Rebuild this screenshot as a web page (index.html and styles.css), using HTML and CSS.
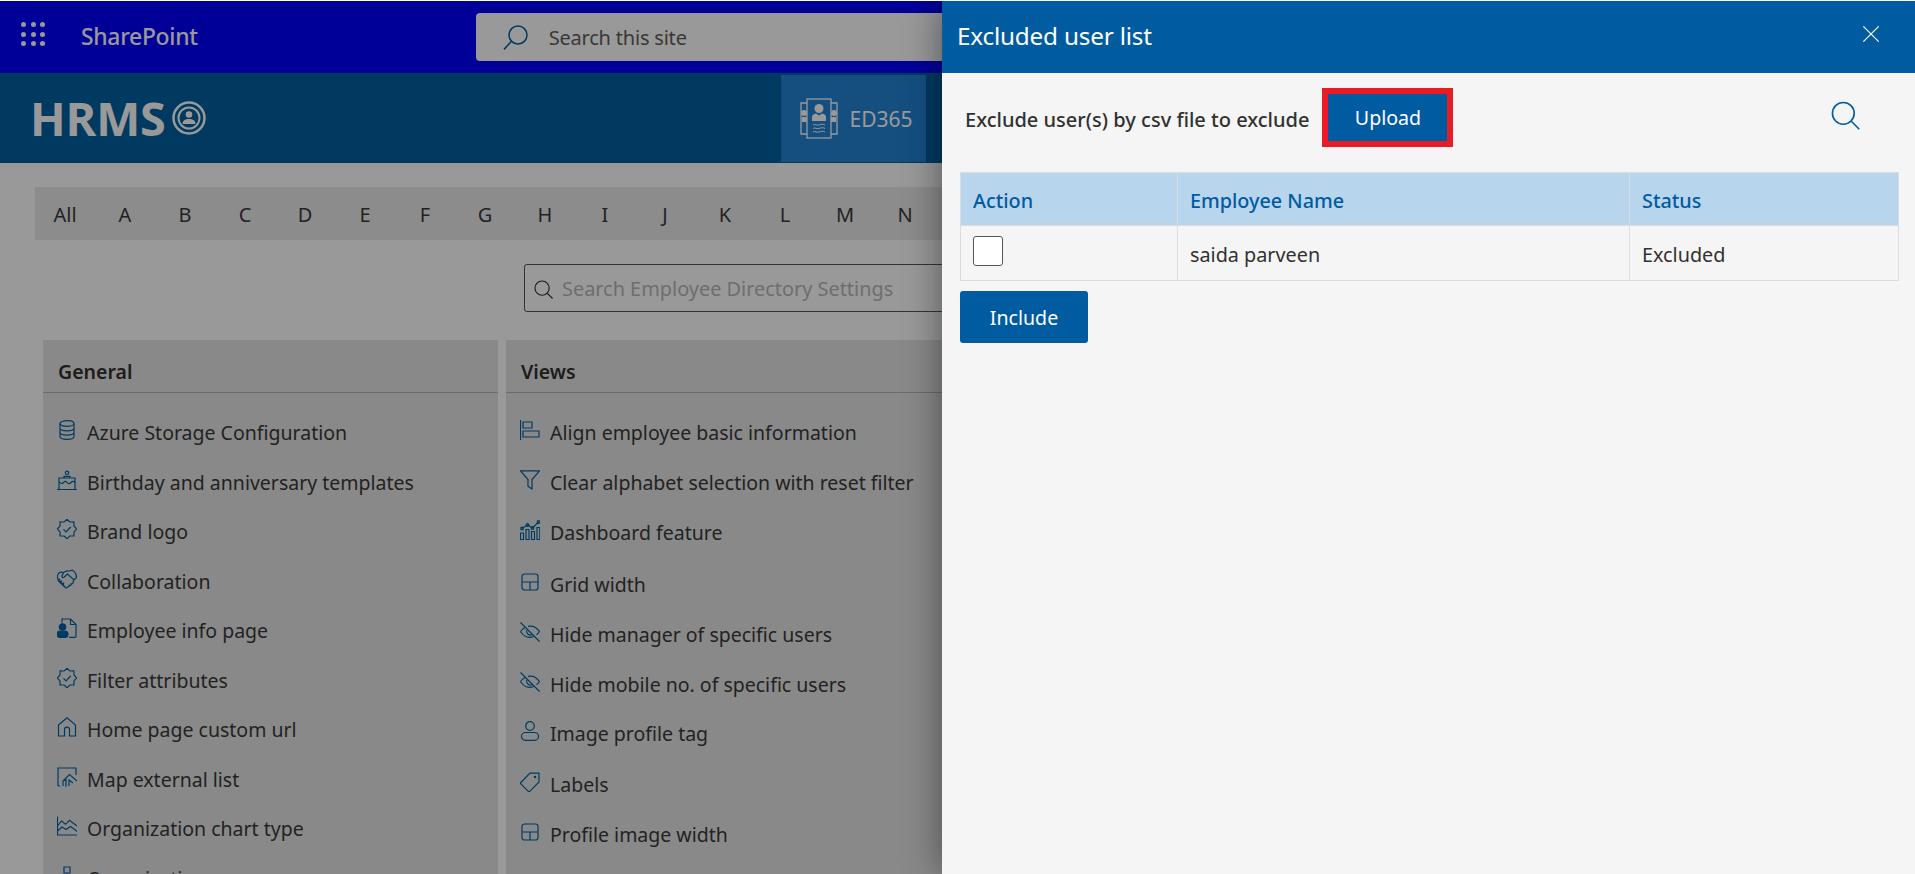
FILE: index.html
```html
<!DOCTYPE html>
<html lang="en">
<head>
<meta charset="utf-8">
<title>Excluded user list</title>
<link rel="stylesheet" href="styles.css">
</head>
<body>
<svg class="sprite" aria-hidden="true">
  <symbol id="i-db" viewBox="0 0 20 20"><ellipse cx="10" cy="3.500" rx="7" ry="2.800"/><path d="M3 3.500v13c0 1.600 3.100 2.800 7 2.800s7-1.200 7-2.800v-13M3 8c0 1.600 3.100 2.800 7 2.800S17 9.600 17 8M3 12.300c0 1.600 3.100 2.800 7 2.800s7-1.200 7-2.800"/></symbol>
  <symbol id="i-cake" viewBox="0 0 20 20"><circle cx="10" cy="2.800" r="1.700"/><path d="M7 8V6.300h6V8M2 19.300V8h16v11.300M0 19.500h20M2 11.500c2 2.500 3 2.500 4.500 1s2.500-1.500 3.500 0 2.500 1.500 4 0 2.500-1.500 4 0"/></symbol>
  <symbol id="i-badge" viewBox="0 0 20 20"><path d="M10 .3l2.900 2.700 4-.1.1 4 2.700 3.100-2.700 2.900-.1 4-4 .1-2.900 2.700-2.900-2.700-4-.1-.1-4L.3 10l2.700-3.100.1-4 4 .1z"/><path d="M6.500 10.300l2.500 2.500 4.700-4.800"/></symbol>
  <symbol id="i-shake" viewBox="0 0 20 20"><path d="M6.500 3.500c2-1.500 3.500-2 5.500-1.500l3.500-.8c2.500 1.500 4 4.500 4 7.300l-2.500 2.500L10.500 5 7 8.300c-1 .7-2.200 0-2-1.300L6.500 3.500zM6.500 3.500C4 2.800 3 3 1.500 4.500.3 6 .2 8 .8 10M.8 10l7.700 8.500c1 1 2.300.2 2-1M3 9.800L1.200 11.500l1.800 1.800 1.800-1.700M5 12l-1.800 1.700 1.800 1.800 1.800-1.700M7 14.300l-1.600 1.500 2 2M10.500 17.500c1 .5 2 0 1.800-1.200 1.200.5 2.300-.3 2-1.500 1.200.3 2.300-.7 1.700-2L17 11.500"/></symbol>
  <symbol id="i-pdoc" viewBox="0 0 20 20"><path d="M5 4.800V1h8.500L19 6.500V18c0 .8-.5 1.300-1.300 1.300H12M13.500 1v5.500H19"/><circle cx="5.500" cy="9" r="3.200" class="solid"/><path d="M0 16.500c0-2.200 1.500-3.300 3-3.300h5c1.700 0 3 1.100 3 3.300 0 1.800-1.300 3-3 3H3c-1.700 0-3-1.200-3-3z" class="solid"/></symbol>
  <symbol id="i-home" viewBox="0 0 20 20"><path d="M10 .8L1.500 8v11h6v-6.500c0-1.400 1-2.300 2.500-2.300s2.500.9 2.500 2.300V19h6V8z"/></symbol>
  <symbol id="i-map" viewBox="0 0 20 20"><path d="M1 19V1h18v7M1 19h2M8 19h1v-6l-3 1 6.500-6.500L20 14M6 19v-5M12 19v-6l4 3"/></symbol>
  <symbol id="i-area" viewBox="0 0 20 20"><path d="M.5 .5v18.500h20M.5 10l4-5 4 3.300 4-4 7.500 5.700M.5 15l4.500-4 4 2.500 4.500-3 7 5"/></symbol>
  <symbol id="i-org" viewBox="0 0 20 20"><path d="M7 1h6v6H7zM10 7v4M2 11h16M2 11v3M18 11v3M0 14h5v5H0zM15 14h5v5h-5zM7.500 14h5v5h-5zM10 11v3"/></symbol>
  <symbol id="i-align" viewBox="0 0 20 20"><path d="M.5 0v20M3 2h9v6H3zM3 11h16v6H3z"/></symbol>
  <symbol id="i-filter" viewBox="0 0 20 20"><path d="M.5 .8h19L12 9.500V19l-4-2.700V9.500z"/></symbol>
  <symbol id="i-bars" viewBox="0 0 20 20"><path d="M.5 13h3v6.500h-3zM6 9.500h3v10H6zM11.500 11.500h3v8h-3zM17 7.500h2.800v12H17zM2 8.500L7.500 5l5 3 6-6"/><circle cx="2" cy="8.500" r="1.300"/><circle cx="7.500" cy="5" r="1.300"/><circle cx="12.500" cy="8" r="1.300"/><circle cx="18.500" cy="2" r="1.300"/></symbol>
  <symbol id="i-grid" viewBox="0 0 20 20"><rect x="2" y="2" width="16" height="16" rx="2.500"/><path d="M2 10h16M10 10v8"/></symbol>
  <symbol id="i-eyeoff" viewBox="0 0 20 20"><path d="M.5 .5l19 19M.5 9.500C2 7.500 3.500 6.300 5 5.500M8 4.300c5-1 8.500.8 11.500 5.200-.9 1.400-2 2.500-3 3.300M13.500 14.500c-5 1.900-9.500.3-13-5"/><path d="M6.800 8c-1 3 2 6 5.200 4.800"/></symbol>
  <symbol id="i-person" viewBox="0 0 20 20"><circle cx="10" cy="5" r="4.300"/><rect x="1.500" y="11.500" width="17" height="7.800" rx="3.900"/></symbol>
  <symbol id="i-tag" viewBox="0 0 20 20"><path d="M.8 10.500L10 1.200h9V10l-9.300 9.300c-.4.400-1 .4-1.400 0L.8 11.900c-.4-.4-.4-1 0-1.400z"/><circle cx="15" cy="5" r=".7"/></symbol>
  <symbol id="i-search" viewBox="0 0 20 20"><circle cx="8.500" cy="8.500" r="7.500"/><path d="M14 14l5.500 5.500"/></symbol>
  <symbol id="i-search-flip" viewBox="0 0 20 20"><circle cx="12" cy="8" r="7.200"/><path d="M6.800 13L.8 19.500"/></symbol>
  <symbol id="i-close" viewBox="0 0 20 20"><path d="M1.500 1.500l17 17M18.500 1.500l-17 17"/></symbol>
</svg>

<div class="page">
  <header class="suitebar">
    <div class="launcher" aria-label="App launcher">
      <i></i><i></i><i></i><i></i><i></i><i></i><i></i><i></i><i></i>
    </div>
    <span class="product">SharePoint</span>
    <div class="sitesearch">
      <svg class="icon sitesearch-icon"><use href="#i-search-flip"/></svg>
      <span>Search this site</span>
    </div>
  </header>

  <section class="band">
    <div class="logo">
      <span class="logo-text">HRMS</span>
      <svg class="logo-mark" viewBox="0 0 34 34">
        <circle cx="17" cy="17" r="15.500" class="logo-ring"/>
        <circle cx="17" cy="17" r="10.500" class="logo-ring-thin"/>
        <circle cx="17" cy="13.500" r="3.300" class="logo-fill"/>
        <path d="M10.500 23c0-3.500 2.500-5 6.500-5s6.500 1.500 6.500 5z" class="logo-fill"/>
      </svg>
    </div>
    <a class="apptab">
      <svg class="apptab-icon" viewBox="0 0 38 42">
        <path d="M7 5H1v31h6M31 5h6v31h-6" class="line"/>
        <rect x="7" y="1" width="24" height="39" class="line"/>
        <circle cx="19" cy="10.500" r="4.500" class="fill"/>
        <path d="M12 23v-4c0-2 1.500-3 4-3.500l3 2 3-2c2.500.5 4 1.500 4 3.500v4z" class="fill"/>
        <path d="M13 27c2-1.500 4 1 6 0s4-1 6 0M13 30.500c2-1.500 4 1 6 0s4-1 6 0M13 34c2-1.500 4 1 6 0s4-1 6 0" class="line thin"/>
        <circle cx="4" cy="15" r="3" class="fill"/>
        <circle cx="34" cy="15" r="3" class="fill"/>
        <path d="M2 19h5v5H2zM31 19h5v5h-5z" class="fill"/>
      </svg>
      <span>ED365</span>
    </a>
  </section>

  <nav class="alpha">
    <span>All</span><span>A</span><span>B</span><span>C</span><span>D</span><span>E</span><span>F</span><span>G</span><span>H</span><span>I</span><span>J</span><span>K</span><span>L</span><span>M</span><span>N</span>
  </nav>

  <div class="dirsearch">
    <svg class="icon dirsearch-icon"><use href="#i-search"/></svg>
    <span>Search Employee Directory Settings</span>
  </div>

  <div class="cards">
    <section class="card">
      <h2>General</h2>
      <ul>
        <li><svg class="icon"><use href="#i-db"/></svg>Azure Storage Configuration</li>
        <li><svg class="icon"><use href="#i-cake"/></svg>Birthday and anniversary templates</li>
        <li><svg class="icon"><use href="#i-badge"/></svg>Brand logo</li>
        <li><svg class="icon"><use href="#i-shake"/></svg>Collaboration</li>
        <li><svg class="icon"><use href="#i-pdoc"/></svg>Employee info page</li>
        <li><svg class="icon"><use href="#i-badge"/></svg>Filter attributes</li>
        <li><svg class="icon"><use href="#i-home"/></svg>Home page custom url</li>
        <li><svg class="icon"><use href="#i-map"/></svg>Map external list</li>
        <li><svg class="icon"><use href="#i-area"/></svg>Organization chart type</li>
        <li><svg class="icon"><use href="#i-org"/></svg>Organization name</li>
      </ul>
    </section>
    <section class="card">
      <h2>Views</h2>
      <ul>
        <li><svg class="icon"><use href="#i-align"/></svg>Align employee basic information</li>
        <li><svg class="icon"><use href="#i-filter"/></svg>Clear alphabet selection with reset filter</li>
        <li class="tall"><svg class="icon"><use href="#i-bars"/></svg>Dashboard feature</li>
        <li class="tall"><svg class="icon"><use href="#i-grid"/></svg>Grid width</li>
        <li><svg class="icon"><use href="#i-eyeoff"/></svg>Hide manager of specific users</li>
        <li><svg class="icon"><use href="#i-eyeoff"/></svg>Hide mobile no. of specific users</li>
        <li><svg class="icon"><use href="#i-person"/></svg>Image profile tag</li>
        <li class="tall"><svg class="icon"><use href="#i-tag"/></svg>Labels</li>
        <li><svg class="icon"><use href="#i-grid"/></svg>Profile image width</li>
      </ul>
    </section>
    <section class="card"></section>
  </div>

  <div class="scrim"></div>

  <aside class="panel">
    <header class="panel-head">
      <h1>Excluded user list</h1>
      <svg class="icon panel-close"><use href="#i-close"/></svg>
    </header>
    <div class="panel-body">
      <div class="toolbar">
        <span class="toolbar-label">Exclude user(s) by csv file to exclude</span>
        <button class="btn btn-upload">Upload</button>
        <svg class="icon toolbar-search"><use href="#i-search"/></svg>
      </div>
      <table class="grid">
        <thead>
          <tr><th class="col-action">Action</th><th class="col-name">Employee Name</th><th>Status</th></tr>
        </thead>
        <tbody>
          <tr><td><span class="check"></span></td><td>saida parveen</td><td>Excluded</td></tr>
        </tbody>
      </table>
      <button class="btn btn-include">Include</button>
    </div>
  </aside>
</div>
</body>
</html>
```
FILE: styles.css
```css
* { box-sizing: border-box; }

html, body { margin: 0; height: 100%; overflow: hidden; background: #fff; }

body {
  font-family: "Noto Sans", "Open Sans", sans-serif;
  font-size: 19px;
  color: #3a3a3a;
}

.sprite { position: absolute; width: 0; height: 0; }

.icon {
  fill: none;
  stroke: currentColor;
  stroke-width: 1.2;
  flex: none;
}

.solid { fill: currentColor; }

.page {
  position: relative;
  height: 874px;
  overflow: hidden;
  border-top: 1px solid #fff;
}

/* suite bar */
.suitebar {
  height: 72px;
  background: #0000ff;
  display: flex;
  align-items: center;
  color: #fff;
}

.launcher {
  display: grid;
  grid-template-columns: repeat(3, 5px);
  gap: 4.500px;
  margin-left: 21px;
  margin-top: -6px;
}

.launcher i { width: 5px; height: 5px; border-radius: 50%; background: #fff; }

.product {
  margin-left: 36px;
  font-size: 22.900px;
  font-weight: 500;
  margin-top: -2px;
  letter-spacing: -.3px;
}

.sitesearch {
  margin-left: 278px;
  width: 800px;
  height: 48px;
  border-radius: 4px;
  background: #fff;
  color: #605e5c;
  display: flex;
  align-items: center;
  font-size: 20px;
  letter-spacing: -.2px;
}

.sitesearch-icon {
  width: 25px;
  height: 25px;
  margin-left: 27px;
  margin-right: 21px;
  color: #0061a2;
}

/* brand band */
.band {
  height: 90px;
  background: #0061a2;
  display: flex;
  align-items: center;
  color: #fff;
}

.logo { display: flex; align-items: center; margin-left: 30px; gap: 7px; }

.logo-text { font-size: 46.700px; font-weight: 700; line-height: 1; letter-spacing: -.2px; font-family: "Open Sans", sans-serif; }

.logo-mark { width: 34px; height: 34px; margin-top: 1px; }

.logo-ring { fill: none; stroke: #fff; stroke-width: 2.500; }
.logo-ring-thin { fill: none; stroke: #fff; stroke-width: 2; }
.logo-fill { fill: #fff; }

.apptab {
  margin-left: 575px;
  width: 145px;
  height: 87px;
  margin-top: 1px;
  background: #2284d5;
  display: flex;
  align-items: center;
  padding-left: 19px;
  gap: 11px;
  font-size: 21px;
}

.apptab-icon { width: 38px; height: 42px; }
.apptab-icon .line { fill: none; stroke: #fff; stroke-width: 1.300; }
.apptab-icon .line.thin { stroke-width: 1; }
.apptab-icon .fill { fill: #fff; }

/* alphabet */
.alpha {
  margin: 24px 35px 0;
  height: 53px;
  padding-top: 2px;
  background: #e9e9e9;
  display: flex;
  align-items: center;
  font-size: 20px;
}

.alpha span { width: 60px; text-align: center; flex: none; }

/* settings search */
.dirsearch {
  margin: 24px 0 0 524px;
  width: 860px;
  height: 48px;
  padding-top: 1px;
  border: 1px solid #555;
  border-radius: 3px;
  display: flex;
  align-items: center;
  color: #b8b8b8;
  font-size: 19.900px;
}

.dirsearch-icon {
  width: 19px;
  height: 19px;
  margin-left: 9px;
  margin-right: 9px;
  color: #2a2a2a;
  margin-top: 1px;
}

/* setting cards */
.cards {
  margin: 28px 0 0 43px;
  display: grid;
  grid-template-columns: 455px 455px 455px;
  gap: 8px;
}

.card { background: #e5e5e5; height: 600px; }

.card h2 {
  margin: 0;
  height: 53px;
  padding: 10px 0 0 15px;
  display: flex;
  align-items: center;
  border-bottom: 1px solid #b5b5b5;
  font-size: 19.500px;
  font-weight: 600;
  color: #323130;
}

.card ul { list-style: none; margin: 0; padding: 15px 0 0 14px; }

.card li {
  height: 49.500px;
  display: flex;
  align-items: center;
  gap: 10px;
  font-size: 19.500px;
  white-space: nowrap;
}

.card li.tall { height: 51.500px; }

.card li .icon { width: 20px; height: 20px; color: #0061a2; margin-top: -5px; }

/* overlay */
.scrim { position: absolute; inset: 0; background: rgba(0, 0, 0, .4); }

/* side panel */
.panel {
  position: absolute;
  top: 0;
  right: 0;
  bottom: 0;
  width: 973px;
  background: #f5f5f5;
  box-shadow: 0 0 36px rgba(0, 0, 0, .45);
}

.panel-head {
  height: 72px;
  background: #005ba1;
  color: #fff;
  display: flex;
  align-items: center;
  justify-content: space-between;
  padding: 0 35px 3px 15px;
}

.panel-head h1 { margin: 0; font-size: 24.300px; font-weight: 400; letter-spacing: -.2px; }

.panel-close { width: 18px; height: 18px; margin-top: -4px; stroke-width: 1.300; }

.panel-body { padding: 15px 16px 0 18px; }

.toolbar { display: flex; align-items: center; height: 59px; padding-left: 5px; }

.toolbar-label { font-weight: 500; font-size: 20.050px; color: #323130; margin-top: 3px; }

.btn {
  border: 0;
  background: #005ba1;
  color: #fff;
  font: inherit;
  font-size: 19.600px;
}

.btn-upload {
  margin-left: 13px;
  width: 131px;
  height: 59px;
  padding-top: 1px;
  border: 6px solid #e81c24;
}

.toolbar-search {
  width: 29px;
  height: 29px;
  margin-left: auto;
  margin-right: 39px;
  margin-top: -5px;
  color: #005ba1;
  stroke-width: 1.100;
}

.grid {
  width: 939px;
  margin: 25px 0 0;
  border-collapse: collapse;
  table-layout: fixed;
  font-size: 19.800px;
}

.grid th, .grid td {
  border: 1px solid #dcdcdc;
  padding: 2px 12px 0;
  text-align: left;
}

.grid th {
  height: 53px;
  background: #b8d5ee;
  color: #005ba1;
  font-weight: 500;
}

.grid td { height: 55px; color: #323130; }

.col-action { width: 217px; }
.col-name { width: 452px; }

.check {
  display: block;
  width: 30px;
  height: 30px;
  background: #fff;
  border: 1px solid #555;
  border-radius: 3px;
  margin-top: -7px;
}

.btn-include {
  display: block;
  margin-top: 10px;
  width: 128px;
  height: 52px;
  border-radius: 3px;
}
```
